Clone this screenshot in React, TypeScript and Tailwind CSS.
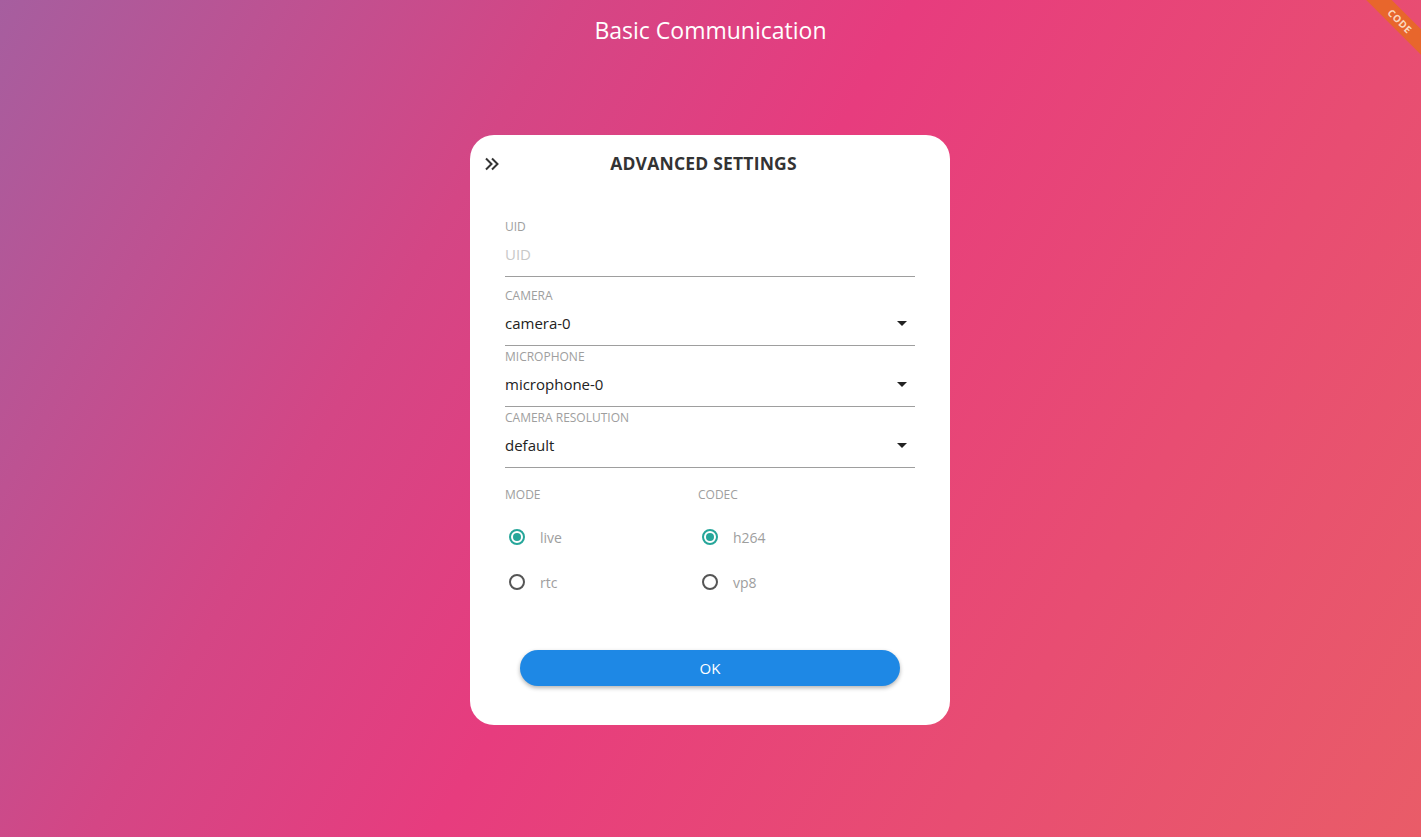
import React from "react";

const font = { fontFamily: '"Open Sans", "Noto Sans", Arial, sans-serif' };

function Arrow() {
  return (
    <svg width="10" height="5" viewBox="0 0 10 5" className="shrink-0">
      <path d="M0 0 L10 0 L5 5 Z" fill="#222" />
    </svg>
  );
}

function SelectField({ label, value }: { label: string; value: string }) {
  return (
    <div className="pt-[3px]">
      <div className="text-[12px] leading-[16px] text-[#9e9e9e]">{label}</div>
      <div className="h-[42px] border-b border-[#9e9e9e] flex items-center justify-between pr-[8px] pb-[2px]">
        <span className="text-[15px] text-[#222]">{value}</span>
        <Arrow />
      </div>
    </div>
  );
}

function Radio({ checked, label }: { checked?: boolean; label: string }) {
  return (
    <div className="flex items-center h-[22px]">
      <div className="w-[24px] flex justify-center">
        <div
          className={
            "w-[16px] h-[16px] rounded-full border-2 flex items-center justify-center " +
            (checked ? "border-[#26a69a]" : "border-[#555]")
          }
        >
          {checked && <div className="w-[8px] h-[8px] rounded-full bg-[#26a69a]" />}
        </div>
      </div>
      <span className="ml-[11px] text-[14px] text-[#9e9e9e]">{label}</span>
    </div>
  );
}

export default function App() {
  return (
    <div
      style={font}
      className="relative w-full h-[837px] overflow-hidden bg-[linear-gradient(120deg,#a65e9f_0%,#d44685_30%,#e73c7e_48%,#e84d72_75%,#e95c68_100%)]"
    >
      <div className="absolute top-[12px] right-[-29px] w-[100px] h-[18px] rotate-45 bg-[#e8662c] flex items-center justify-center">
        <span className="text-[10px] font-bold text-[#fbd9c0] tracking-[0.5px]">CODE</span>
      </div>

      <div className="h-[60px] flex items-center justify-center">
        <h1 className="text-[23px] text-white">Basic Communication</h1>
      </div>

      <div className="mt-[75px] ml-[470px] w-[480px] h-[590px] bg-white rounded-[24px] px-[35px] pt-[14px]">
        <div className="relative h-[28px] flex items-center justify-center">
          <svg
            className="absolute left-[-21px] top-[8px]"
            width="16"
            height="14"
            viewBox="0 0 16 14"
            fill="none"
            stroke="#333"
            strokeWidth="2"
          >
            <path d="M2 1.5 L7.5 7 L2 12.5" />
            <path d="M8 1.5 L13.5 7 L8 12.5" />
          </svg>
          <h2 className="mr-[13px] text-[17.5px] font-bold text-[#333] tracking-[0.2px]">ADVANCED SETTINGS</h2>
        </div>

        <div className="mt-[42px]">
          <div className="text-[12px] leading-[16px] text-[#9e9e9e]">UID</div>
          <div className="h-[42px] border-b border-[#9e9e9e] flex items-center pb-[2px]">
            <span className="text-[15px] text-[#c8c8c8]">UID</span>
          </div>
        </div>
        <div className="mt-[8px]">
          <SelectField label="CAMERA" value="camera-0" />
          <SelectField label="MICROPHONE" value="microphone-0" />
          <SelectField label="CAMERA RESOLUTION" value="default" />
        </div>

        <div className="mt-[19px] flex">
          <div className="w-[193px]">
            <div className="text-[12px] leading-[16px] text-[#9e9e9e]">MODE</div>
            <div className="mt-[23px] flex flex-col gap-[23px]">
              <Radio checked label="live" />
              <Radio label="rtc" />
            </div>
          </div>
          <div>
            <div className="text-[12px] leading-[16px] text-[#9e9e9e]">CODEC</div>
            <div className="mt-[23px] flex flex-col gap-[23px]">
              <Radio checked label="h264" />
              <Radio label="vp8" />
            </div>
          </div>
        </div>

        <div className="mt-[57px] flex justify-center">
          <button className="w-[380px] h-[36px] rounded-full bg-[#1e88e5] text-white text-[15px] shadow-[0_2px_4px_rgba(0,0,0,0.3)]">
            OK
          </button>
        </div>
      </div>
    </div>
  );
}
